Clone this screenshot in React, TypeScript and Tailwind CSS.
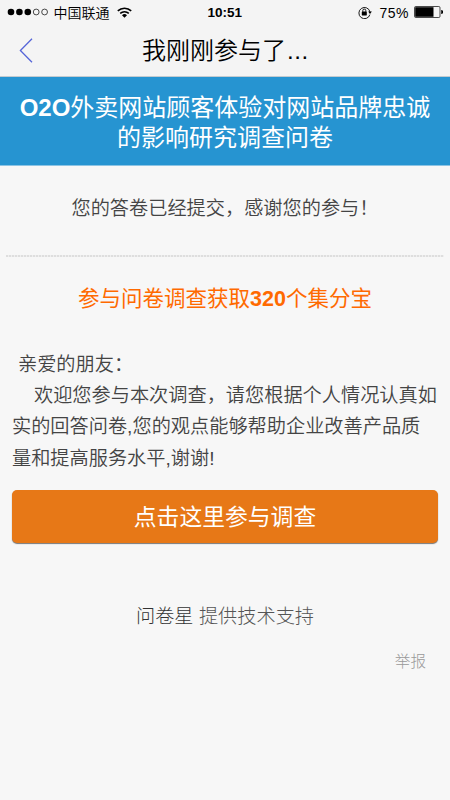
const sans = "font-['Liberation_Sans','Noto_Sans_CJK_SC',sans-serif]"

function StatusBar() {
  return (
    <div className="flex h-6 items-center pl-[7px] pr-[7px] text-black">
      <svg width="42" height="8" viewBox="0 0 42 8">
        <circle cx="4" cy="4" r="3.3" />
        <circle cx="12.4" cy="4" r="3.3" />
        <circle cx="20.8" cy="4" r="3.3" />
        <circle cx="29.2" cy="4" r="2.9" fill="none" stroke="black" strokeWidth="0.7" />
        <circle cx="37.6" cy="4" r="2.9" fill="none" stroke="black" strokeWidth="0.7" />
      </svg>
      <span className="ml-[4.5px] w-[56px] pt-px text-[14px] leading-6 font-[350] whitespace-nowrap">中国联通</span>
      <svg className="ml-[7px]" width="15" height="11" viewBox="0 0 15 11">
        <path d="M0.8 3.9A9.6 9.6 0 0 1 14.2 3.9" fill="none" stroke="black" strokeWidth="1.6" />
        <path d="M3.2 6.4A6.2 6.2 0 0 1 11.8 6.4" fill="none" stroke="black" strokeWidth="1.5" />
        <path d="M7.5 10.8L5 8.3A3.5 3.5 0 0 1 10 8.3Z" />
      </svg>
      <span className="ml-[76px] pt-px text-[13.5px] font-bold leading-6">10:51</span>
      <svg className="ml-auto" width="14" height="13" viewBox="0 0 14 13">
        <path d="M11.9 8.6A5.6 5.6 0 1 1 12 6" fill="none" stroke="black" strokeWidth="0.9" />
        <path d="M10.2 5.5H13.9L12 8Z" />
        <rect x="3.8" y="5.6" width="5" height="3.8" rx="0.4" />
        <path d="M4.8 5.8V4.6A1.5 1.5 0 0 1 7.8 4.6V5.8" fill="none" stroke="black" strokeWidth="0.9" />
      </svg>
      <span className="ml-[7px] pt-px text-[14px] leading-6 tracking-[0.5px]">75%</span>
      <svg className="ml-[5px]" width="29" height="12" viewBox="0 0 29 12">
        <rect x="0.5" y="0.5" width="25.5" height="11" rx="1.2" fill="none" stroke="black" strokeWidth="0.7" />
        <rect x="1.2" y="1.2" width="18.3" height="9.6" />
        <path d="M27.2 4A2 2 0 0 1 27.2 8Z" />
      </svg>
    </div>
  )
}

function NavBar() {
  return (
    <div className="flex h-[53px] items-center border-b border-[#c3cbd0] text-black">
      <svg className="ml-[19px]" width="14" height="25" viewBox="0 0 14 25">
        <path d="M13 0.8L1.4 12.5L13 24.2" fill="none" stroke="#5565d8" strokeWidth="1.3" />
      </svg>
      <h1 className="ml-[109px] pt-px text-[24px] leading-[51px] font-[350] whitespace-nowrap">
        我刚刚参与了<span className="ml-[1px] tracking-[0.6px]">...</span>
      </h1>
    </div>
  )
}

export default function App() {
  return (
    <div className={`flex h-[800px] w-[450px] flex-col overflow-hidden bg-[#f7f7f7] text-[#444] ${sans}`}>
      <header className="bg-[#f4f4f4]">
        <StatusBar />
        <NavBar />
      </header>

      <div className="h-[89px] border-b border-[#8cc4e4] bg-[#2694d1] pt-[16px] text-center text-[24px] leading-[30px] text-white">
        <p className="whitespace-nowrap">
          <b>O2O</b>外卖网站顾客体验对网站品牌忠诚
        </p>
        <p>的影响研究调查问卷</p>
      </div>

      <main className="flex flex-col">
        <p className="mt-[27px] pl-[71.5px] text-[19.2px] leading-[32px] font-[350] whitespace-nowrap">
          您的答卷已经提交，感谢您的参与！
        </p>
        <div className="mx-[6px] mt-[30px] h-[2px] bg-[repeating-linear-gradient(90deg,#dedede_0_2px,#efefef_2px_3px)]" />

        <h2 className="mt-[26px] text-center text-[21.5px] leading-[32px] text-[#ff6a00]">
          参与问卷调查获取<b>320</b>个集分宝
        </h2>

        <div className="mt-[34px] pl-[12px] text-[19.2px] leading-[31.2px] font-[350] whitespace-nowrap">
          <p className="pl-[6px]">亲爱的朋友：</p>
          <p className="pl-[22px]">欢迎您参与本次调查，请您根据个人情况认真如</p>
          <p>实的回答问卷,您的观点能够帮助企业改善产品质</p>
          <p>量和提高服务水平,谢谢!</p>
        </div>

        <button className="mx-[12px] mt-[16px] h-[53px] rounded-[5px] bg-[#e77817] pt-px text-[22.8px] text-white shadow-[0_1px_1px_#777]">
          点击这里参与调查
        </button>

        <p className="mt-[59px] text-center text-[19.2px] leading-[30px] font-light text-[#555]">
          <span className="text-[#333]">问卷星</span> 提供技术支持
        </p>
        <a className="mt-[18px] pr-[24px] text-right text-[15.6px] leading-[24px] font-light text-[#999]">举报</a>
      </main>
    </div>
  )
}
